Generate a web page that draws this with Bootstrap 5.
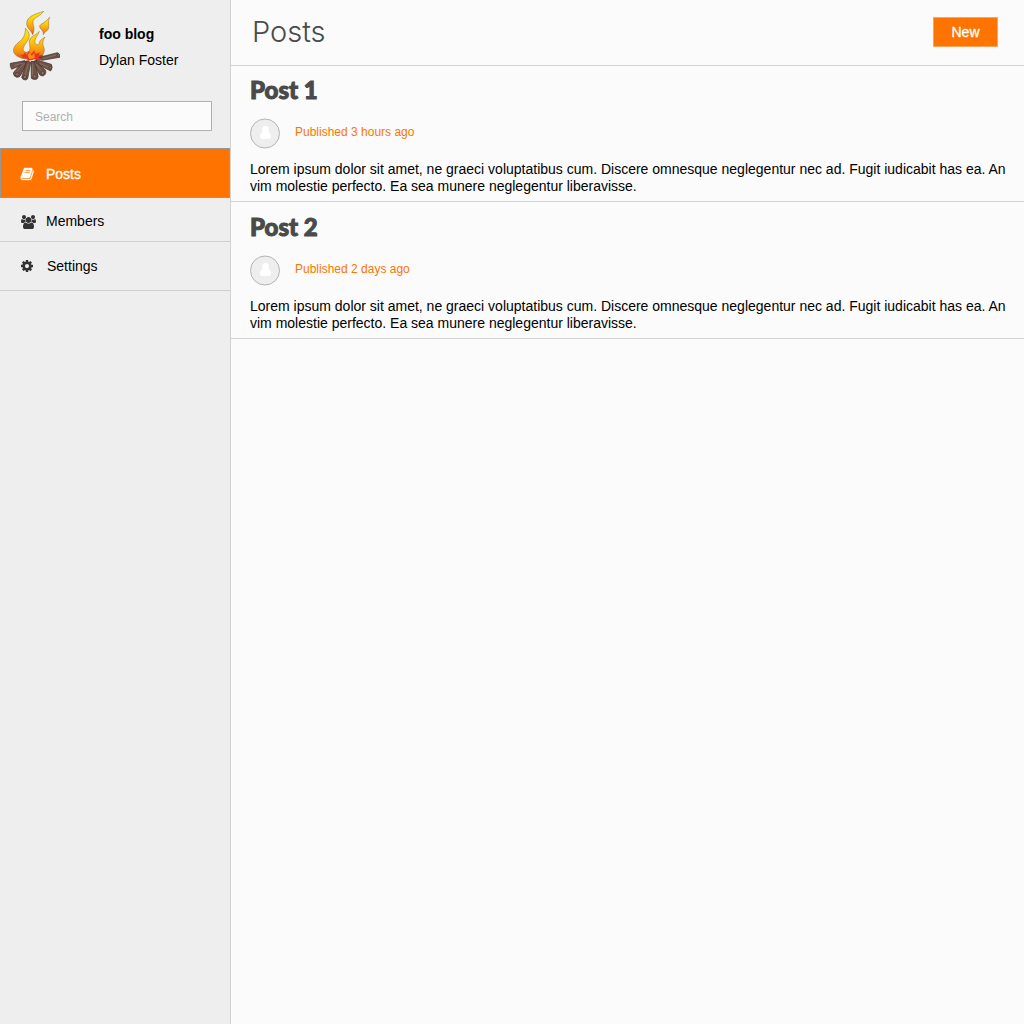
<!DOCTYPE html>
<html lang="en">
<head>
<meta charset="utf-8">
<meta name="viewport" content="width=device-width, initial-scale=1">
<title>foo blog – Posts</title>
<link href="https://cdn.jsdelivr.net/npm/bootstrap@5.3.0/dist/css/bootstrap.min.css" rel="stylesheet">
<style>
body { font-family: "Liberation Sans", Arial, sans-serif; font-size: 14px; line-height: 17px; color: #000; background: #fbfbfb; }
.sidebar { width: 231px; background: #eee; border-right: 1px solid #d2d2d2; }
.brand { padding: 8px; gap: 37px; height: 81px; }
.brand-text { line-height: 26px; padding-top: 13px; }
.search-form { padding: 20px 18px 17px 22px; }
.search-box { height: 30px; padding: 2px 12px 0; font-size: 12px; border: 1px solid #b0b0b0; border-radius: 0; background: #fbfbfb; }
.search-box::placeholder { color: #b0b0b0; }
.side-link { display: flex; align-items: center; gap: 9px; padding: 4px 20px 0; height: 44px; color: #000; text-decoration: none; border-bottom: 1px solid #cecece; }
.side-link svg { width: 17px; height: 14px; fill: #333; }
.side-link.tall { height: 49px; padding: 0 21px; }
.side-link.active { height: 50px; padding: 2px 19px 0; color: #fff; background: #ff7400; border: 1px solid #979797; -webkit-text-stroke: 0.3px #fff; }
.side-link.active svg { fill: #fff; stroke: #fff; stroke-width: 50px; }
.topbar { height: 66px; padding: 0 26px 2px 21px; border-bottom: 1px solid #d2d2d2; }
.topbar h1 { font-family: Inter, Roboto, sans-serif; font-weight: 300; font-size: 29px; line-height: 36px; color: #4a4a4a; }
.btn-new { width: 65px; height: 30px; padding: 2px 0 0; border: 1px solid #ffa35c; border-radius: 0; background: #ff7400; color: #fff; font-size: 14px; line-height: 17px; -webkit-text-stroke: 0.3px #fff; }
.btn-new:hover { background: #e66900; color: #fff; }
.post-list { margin-top: -1px; }
.post { padding: 9px 18px 6px 19px; border-bottom: 1px solid #d2d2d2; }
.post h2 { font-family: Lato, sans-serif; font-weight: 900; font-size: 24px; line-height: 32px; color: #4a4a4a; margin-bottom: 12px; -webkit-text-stroke: 1px #4a4a4a; }
.meta-row { gap: 14px; margin-bottom: 12px; font-size: 12px; color: #ff7400; }
.meta-row span { padding-bottom: 3px; }
</style>
</head>
<body>
<div class="d-flex min-vh-100">
  <aside class="sidebar flex-shrink-0">
    <div class="brand d-flex">
      <svg width="54" height="74" viewBox="24 24 162 222" aria-hidden="true">
        <defs>
          <linearGradient id="flame" x1="0" y1="0" x2="0" y2="1">
            <stop offset="0" stop-color="#fff200"/><stop offset=".45" stop-color="#fcc20c"/><stop offset=".8" stop-color="#f58a10"/><stop offset="1" stop-color="#e8401c"/>
          </linearGradient>
        </defs>
        <g stroke="#8a6430" stroke-width="1.5" fill="url(#flame)">
          <path d="M131 34C118 51 100 53 99 65C98 77 107 83 98 104C94 91 80 86 80 70C81 48 107 42 131 34Z"/>
          <path d="M149 52C142 63 149 76 145 87C141 95 134 94 130 104C132 89 118 89 119 77C128 69 136 67 149 52Z"/>
          <path d="M76 85C91 99 91 112 80 126C72 137 66 146 72 154C78 160 89 156 90 145C91 136 84 126 92 114C100 105 110 105 118 94C112 110 103 117 105 128C107 136 116 137 118 128C120 119 127 117 135 111C129 122 126 129 131 141C137 158 127 169 112 174C89 182 56 176 45 163C35 150 43 136 57 126C70 116 77 104 76 85Z"/>
        </g>
        <path d="M60 165L70 164L75 157L80 165L87 153L93 163L102 151L107 162L119 157L117 166L132 164L120 174L126 182L102 178L84 183L80 175L63 175L70 170Z" fill="#e8381c"/>
        <path d="M83 166L90 157L95 168L103 158L104 174L88 178Z" fill="#ff8a18"/>
        <g fill="#6d5348" stroke="#3c2e28" stroke-width="2" stroke-linejoin="round">
          <path d="M118 172L172 158Q180 160 179 172L126 181Z"/>
          <path d="M75 182L31 190Q29 200 35 208L78 190Z"/>
          <path d="M69 184L40 218Q40 229 50 232Q59 233 63 224L83 185Z"/>
          <path d="M80 182L65 232Q67 240 77 240Q84 239 84 231L92 187Z"/>
          <path d="M108 179L154 193Q160 203 152 213L107 190Z"/>
          <path d="M105 181L137 211Q140 223 129 228Q119 228 116 219L99 189Z"/>
          <path d="M93 184L94 235Q101 241 111 237Q117 230 113 222L103 184Z"/>
        </g>
        <g fill="none" stroke="#9a7d6d" stroke-width="2">
          <path d="M128 176L169 165M43 196L70 189M50 214L73 190M75 228L85 191M98 228L98 193M123 211L106 191M146 202L119 190"/>
        </g>
        <g fill="#8d7060" stroke="#3c2e28" stroke-width="1.5">
          <circle cx="52" cy="223" r="5"/><circle cx="75" cy="231" r="5"/><circle cx="104" cy="229" r="5"/><circle cx="128" cy="219" r="5"/><circle cx="151" cy="203" r="4"/><ellipse cx="175" cy="166" rx="3" ry="6"/>
        </g>
      </svg>
      <div class="brand-text">
        <div class="fw-bold">foo blog</div>
        <div>Dylan Foster</div>
      </div>
    </div>
    <form class="search-form" role="search">
      <input class="form-control search-box" type="search" placeholder="Search" aria-label="Search">
    </form>
    <nav>
      <a class="side-link active" href="#" aria-current="page">
        <svg viewBox="-80 0 1920 1792" preserveAspectRatio="xMinYMid meet" aria-hidden="true"><path d="M1639 478q40 57 18 129l-275 906q-19 64-76.5 107.5t-122.5 43.5h-923q-77 0-148.5-53.5t-99.5-131.5q-24-67-2-127 0-4 3-27t4-37q1-8-3-21.5t-3-19.5q2-11 8-21t16.5-23.5 16.5-23.5q23-38 45-91.5t30-91.5q3-10 .5-30t-.5-28q3-11 17-28t17-23q21-36 42-92t25-90q1-9-2.5-32t.5-28q4-13 22-30.5t22-22.5q19-26 42.5-84.5t27.5-96.5q1-8-3-25.5t-2-26.5q2-8 9-18t18-23 17-21q8-12 16.5-30.5t15-35 16-36 19.5-32 26.5-23.5 36-11.5 47.5 5.5l-1 3q38-9 51-9h761q74 0 114 56t18 130l-274 906q-36 119-71.5 153.5t-128.5 34.5h-869q-27 0-38 15-11 16-1 43 24 70 144 70h923q29 0 56-15.5t35-41.5l300-987q7-22 5-57 38 15 59 43zm-1064 2q-4 13 2 22.5t20 9.5h608q13 0 25.5-9.5t16.5-22.5l21-64q4-13-2-22.5t-20-9.5h-608q-13 0-25.5 9.5t-16.5 22.5zm-83 256q-4 13 2 22.5t20 9.5h608q13 0 25.5-9.5t16.5-22.5l21-64q4-13-2-22.5t-20-9.5h-608q-13 0-25.5 9.5t-16.5 22.5z"/></svg>
        <span>Posts</span>
      </a>
      <a class="side-link" href="#">
        <svg viewBox="0 0 1920 1792" aria-hidden="true"><path d="M593 896q-162 5-265 128h-134q-82 0-138-40.5t-56-118.5q0-353 124-353 6 0 43.5 21t97.5 42.5 119 21.5q67 0 133-23-5 37-5 66 0 139 81 256zm1071 637q0 120-73 189.5t-194 69.5h-874q-121 0-194-69.5t-73-189.5q0-53 3.5-103.5t14-109 26.5-108.5 43-97.5 62-81 85.5-53.5 111.5-20q10 0 43 21.5t73 48 107 48 135 21.5 135-21.5 107-48 73-48 43-21.5q61 0 111.5 20t85.5 53.5 62 81 43 97.5 26.5 108.5 14 109 3.5 103.5zm-1024-1277q0 106-75 181t-181 75-181-75-75-181 75-181 181-75 181 75 75 181zm704 384q0 159-112.5 271.5t-271.5 112.5-271.5-112.5-112.5-271.5 112.5-271.5 271.5-112.5 271.5 112.5 112.5 271.5zm576 225q0 78-56 118.5t-138 40.5h-134q-103-123-265-128 81-117 81-256 0-29-5-66 66 23 133 23 59 0 119-21.5t97.5-42.5 43.5-21q124 0 124 353zm-128-609q0 106-75 181t-181 75-181-75-75-181 75-181 181-75 181 75 75 181z"/></svg>
        <span>Members</span>
      </a>
      <a class="side-link tall" href="#">
        <svg viewBox="0 -256 1920 1792" preserveAspectRatio="xMinYMid meet" aria-hidden="true"><path d="M1024 640q0-106-75-181t-181-75-181 75-75 181 75 181 181 75 181-75 75-181zm512-109v222q0 12-8 23t-20 13l-185 28q-19 54-39 91 35 50 107 138 10 12 10 25t-9 23q-27 37-99 108t-94 71q-12 0-26-9l-138-108q-44 23-91 38-16 136-29 186-7 28-36 28h-222q-14 0-24.5-8.5t-11.5-21.5l-28-184q-49-16-90-37l-141 107q-10 9-25 9-14 0-25-11-126-114-165-168-7-10-7-23 0-12 8-23 15-21 51-66.5t54-70.5q-27-50-41-99l-183-27q-13-2-21-12.5t-8-23.5v-222q0-12 8-23t19-13l186-28q14-46 39-92-40-57-107-138-10-12-10-24 0-10 9-23 26-36 98.5-107.5t94.5-71.5q13 0 26 10l138 107q44-23 91-38 16-136 29-186 7-28 36-28h222q14 0 24.5 8.5t11.5 21.5l28 184q49 16 90 37l142-107q9-9 24-9 13 0 25 10 129 119 165 170 7 8 7 22 0 12-8 23-15 21-51 66.5t-54 70.5q26 50 41 98l183 28q13 2 21 12.5t8 23.5z"/></svg>
        <span>Settings</span>
      </a>
    </nav>
  </aside>
  <main class="flex-grow-1">
    <header class="topbar d-flex align-items-center justify-content-between">
      <h1 class="m-0">Posts</h1>
      <button type="button" class="btn btn-new">New</button>
    </header>
    <div class="post-list">
      <article class="post">
        <h2>Post 1</h2>
        <div class="meta-row d-flex align-items-center">
          <svg width="31" height="31" viewBox="0 0 31 31" aria-hidden="true"><circle cx="15" cy="15.5" r="14.5" fill="#eee" stroke="#b4b4b4"/><circle cx="15.500" cy="11.500" r="3.500" fill="#fff"/><path d="M12 14Q10 15 10 18.500Q10 21 12.500 21H18.500Q21 21 21 18.500Q21 15 19 14Q15.500 13 12 14Z" fill="#fff"/></svg>
          <span>Published 3 hours ago</span>
        </div>
        <p class="m-0">Lorem ipsum dolor sit amet, ne graeci voluptatibus cum. Discere omnesque neglegentur nec ad. Fugit iudicabit has ea. An vim molestie perfecto. Ea sea munere neglegentur liberavisse.</p>
      </article>
      <article class="post">
        <h2>Post 2</h2>
        <div class="meta-row d-flex align-items-center">
          <svg width="31" height="31" viewBox="0 0 31 31" aria-hidden="true"><circle cx="15" cy="15.5" r="14.5" fill="#eee" stroke="#b4b4b4"/><circle cx="15.500" cy="11.500" r="3.500" fill="#fff"/><path d="M12 14Q10 15 10 18.500Q10 21 12.500 21H18.500Q21 21 21 18.500Q21 15 19 14Q15.500 13 12 14Z" fill="#fff"/></svg>
          <span>Published 2 days ago</span>
        </div>
        <p class="m-0">Lorem ipsum dolor sit amet, ne graeci voluptatibus cum. Discere omnesque neglegentur nec ad. Fugit iudicabit has ea. An vim molestie perfecto. Ea sea munere neglegentur liberavisse.</p>
      </article>
    </div>
  </main>
</div>
<script src="https://cdn.jsdelivr.net/npm/bootstrap@5.3.0/dist/js/bootstrap.bundle.min.js"></script>
</body>
</html>
